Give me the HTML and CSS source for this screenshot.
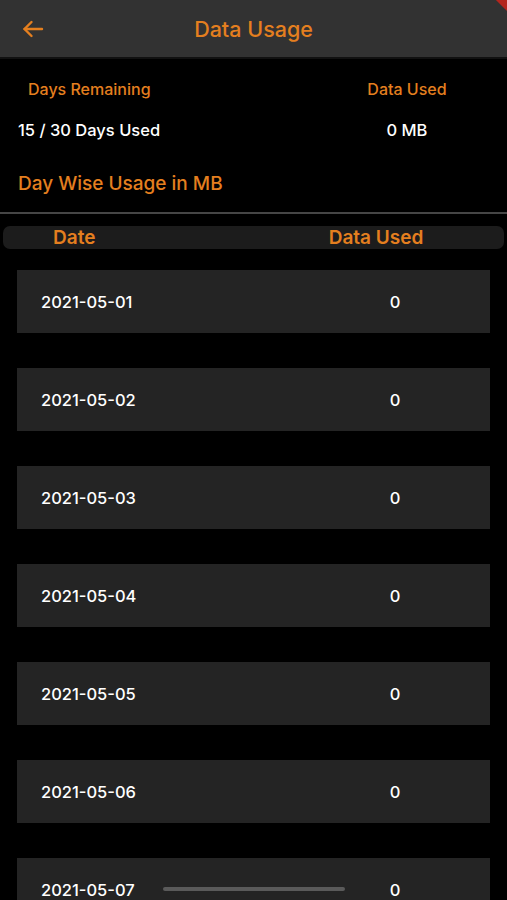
FILE: index.html
```html
<!DOCTYPE html>
<html lang="en">
<head>
    <meta charset="UTF-8">
    <meta name="viewport" content="width=device-width, initial-scale=1.0">
    <title>Data Usage</title>
    <link rel="stylesheet" href="styles.css">
</head>
<body>

    <div class="appbar">
        <div class="back">
            <svg width="22" height="18" viewBox="0 0 22 18" fill="none" stroke="#e47f1f" stroke-width="2.4" stroke-linecap="round" stroke-linejoin="round">
                <path d="M20 9H2.5"/>
                <path d="M9.5 2L2.5 9l7 7"/>
            </svg>
        </div>
        <h1>Data Usage</h1>
        <div></div>
    </div>
    <div class="debug-corner"></div>

    <div class="summary">
        <div class="left">
            <div class="label indent">Days Remaining</div>
            <div class="value">15 / 30 Days Used</div>
        </div>
        <div class="right">
            <div class="label">Data Used</div>
            <div class="value">0 MB</div>
        </div>
    </div>

    <h2 class="section-title">Day Wise Usage in MB</h2>
    <div class="divider"></div>

    <div class="table-head">
        <span class="col-date">Date</span>
        <span class="col-used">Data Used</span>
    </div>

    <div class="rows">
        <div class="row"><span class="col-date">2021-05-01</span><span class="col-used">0</span></div>
        <div class="row"><span class="col-date">2021-05-02</span><span class="col-used">0</span></div>
        <div class="row"><span class="col-date">2021-05-03</span><span class="col-used">0</span></div>
        <div class="row"><span class="col-date">2021-05-04</span><span class="col-used">0</span></div>
        <div class="row"><span class="col-date">2021-05-05</span><span class="col-used">0</span></div>
        <div class="row"><span class="col-date">2021-05-06</span><span class="col-used">0</span></div>
        <div class="row"><span class="col-date">2021-05-07</span><span class="col-used">0</span></div>
    </div>

    <div class="home-indicator"></div>

</body>
</html>
```

FILE: styles.css
```css
body {
    margin: 0;
    background-color: #000;
    color: #fff;
    font-family: Inter, "Noto Sans", sans-serif;
    height: 900px;
    overflow: hidden;
}
.appbar {
    height: 57px;
    background-color: #323232;
    border-bottom: 2px solid #111;
    display: grid;
    grid-template-columns: 80px 1fr 80px;
    align-items: center;
}
.back {
    padding-left: 22px;
    display: flex;
    align-items: center;
}
.appbar h1 {
    margin: 0;
    text-align: center;
    color: #e47f1f;
    font-size: 21.5px;
    font-weight: 500;
}
.debug-corner {
    position: absolute;
    top: -4px;
    right: -12px;
    width: 30px;
    height: 10px;
    background-color: #b3261e;
    transform: rotate(45deg);
}
.summary {
    display: grid;
    grid-template-columns: 1fr 200px;
    padding-top: 20px;
}
.left {
    padding-left: 18px;
}
.right {
    text-align: center;
}
.label {
    color: #e47f1f;
    font-size: 16px;
    line-height: 20px;
    font-weight: 500;
}
.indent {
    padding-left: 10px;
}
.value {
    margin-top: 21px;
    font-size: 16.5px;
    line-height: 20px;
    font-weight: 500;
}
.section-title {
    margin: 32px 0 0 18px;
    color: #e47f1f;
    font-size: 19px;
    line-height: 24px;
    font-weight: 500;
}
.divider {
    height: 2px;
    background-color: #464646;
    margin-top: 16px;
}
.table-head {
    margin: 12px 3px 0 3px;
    height: 23px;
    background-color: #1c1c1c;
    border-radius: 7px;
    display: grid;
    grid-template-columns: 1fr 256px;
    align-items: center;
    color: #e47f1f;
    font-size: 19px;
    font-weight: 600;
}
.table-head .col-date {
    padding-left: 50px;
}
.table-head .col-used {
    text-align: center;
}
.rows {
    margin: 21px 17px 0 17px;
    display: flex;
    flex-direction: column;
    gap: 35px;
}
.row {
    height: 63px;
    background-color: #242424;
    display: grid;
    grid-template-columns: 1fr 190px;
    align-items: center;
    font-size: 16.5px;
    font-weight: 500;
    flex-shrink: 0;
}
.row .col-date {
    padding-left: 24px;
}
.row .col-used {
    text-align: center;
}
.home-indicator {
    position: fixed;
    left: 163px;
    bottom: 9px;
    width: 182px;
    height: 4px;
    border-radius: 2px;
    background-color: #5a5a5a;
}
```
